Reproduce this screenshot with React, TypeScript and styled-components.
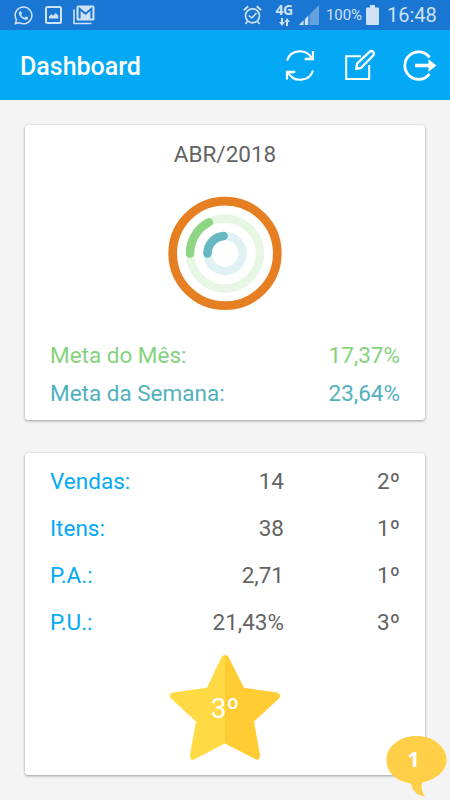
import React from "react";
import styled, { createGlobalStyle } from "styled-components";
import { FaWhatsapp } from "react-icons/fa";

const GlobalStyle = createGlobalStyle`
  * { box-sizing: border-box; }
  body {
    margin: 0;
    background: #f4f4f4;
    font-family: Roboto, "Liberation Sans", sans-serif;
  }
  svg { display: block; flex: none; overflow: visible; }
`;

const Screen = styled.div`
  width: 450px;
  height: 800px;
  display: flex;
  flex-direction: column;
  position: relative;
  overflow: hidden;
  background: #f4f4f4;
`;

const StatusBar = styled.div`
  height: 30px;
  flex: none;
  display: flex;
  align-items: center;
  padding: 0 13px 0 13px;
  background: #1976d2;
  color: #cfe1f5;
`;

const Notifications = styled.div`
  flex: 1;
  display: flex;
  align-items: center;
  gap: 11px;
`;

const Network = styled.div`
  width: 20px;
  margin: 0 5px 0 12px;
  display: flex;
  flex-direction: column;
  align-items: center;
  gap: 2px;
  font: 700 14px/12px "Open Sans", sans-serif;
  letter-spacing: -0.5px;
`;

const Battery = styled.span`
  width: 36px;
  margin: 0 4px 0 7px;
  font-size: 15px;
  line-height: 20px;
  letter-spacing: -0.1px;
  white-space: nowrap;
`;

const Clock = styled.span`
  width: 50px;
  margin-left: 8px;
  font-size: 20px;
  line-height: 30px;
  white-space: nowrap;
`;

const Header = styled.header`
  height: 70px;
  flex: none;
  display: flex;
  align-items: center;
  justify-content: space-between;
  padding: 0 13px 0 20px;
  background: #03a9f4;
  color: #fff;
`;

const Title = styled.h1`
  margin: 3px 0 0;
  font-size: 25px;
  line-height: 30px;
  font-weight: 500;
`;

const Actions = styled.div`
  display: flex;
  align-items: center;
  gap: 28px;
`;

const Content = styled.main`
  display: flex;
  flex-direction: column;
  gap: 33px;
  padding: 25px;
`;

const Card = styled.section<{ $height: number }>`
  height: ${(p) => p.$height}px;
  flex: none;
  display: flex;
  flex-direction: column;
  background: #fff;
  border-radius: 3px;
  box-shadow: 0 1px 3px rgba(0, 0, 0, 0.35), 0 0 1px rgba(0, 0, 0, 0.2);
  font-size: 22.5px;
  color: #646464;
`;

const Month = styled.h2`
  margin: 14px 0 28px;
  text-align: center;
  font-size: 22.5px;
  line-height: 30px;
  font-weight: 400;
`;

const Chart = styled.div`
  height: 114px;
  margin-bottom: 25px;
  display: flex;
  justify-content: center;
`;

const GoalRow = styled.div<{ $color: string }>`
  height: 38px;
  padding: 0 25px;
  display: flex;
  align-items: center;
  justify-content: space-between;
  color: ${(p) => p.$color};
`;

const Stats = styled.div`
  padding: 4px 25px 9px;
`;

const StatRow = styled.div`
  height: 47px;
  display: grid;
  grid-template-columns: 100px 134px 116px;
  align-items: center;
`;

const StatLabel = styled.span`
  color: #03a9f4;
`;

const StatValue = styled.span`
  text-align: right;
`;

const Medal = styled.div`
  width: 112px;
  height: 108px;
  margin: 0 auto;
  position: relative;
`;

const MedalText = styled.span`
  position: absolute;
  inset: 39px 0 auto 0;
  text-align: center;
  font-size: 28px;
  line-height: 32px;
  color: #fff;
`;

const Bubble = styled.div`
  position: absolute;
  left: 386px;
  top: 736px;
  width: 61px;
  height: 61px;
`;

const BubbleText = styled.span`
  position: absolute;
  inset: 8px 6px auto 0;
  text-align: center;
  font: 700 22px/28px "Open Sans", sans-serif;
  color: #fff;
`;

const PictureIcon = () => (
  <svg width="17" height="18" viewBox="0 0 17 18">
    <rect x="1" y="1" width="15" height="16" rx="1.5" fill="none" stroke="currentColor" strokeWidth="2" />
    <path d="M4 12.5V10.5L6.5 8L8.3 9.8L10.8 6.7L13.3 10V12.5Z" fill="currentColor" />
  </svg>
);

const MailIcon = () => (
  <svg width="22" height="20" viewBox="0 0 22 20" fill="none">
    <path d="M1 4.5V18.5H18.5" stroke="currentColor" strokeWidth="1.6" />
    <rect x="3.5" y="0.5" width="18" height="15" rx="1.5" fill="currentColor" />
    <path d="M6.6 13.5V3.8L12.5 8.7L18.4 3.8V13.5" stroke="#1976d2" strokeWidth="2" />
  </svg>
);

const AlarmIcon = () => (
  <svg width="19" height="20" viewBox="0 0 19 20" fill="none" stroke="currentColor">
    <circle cx="9.5" cy="10.8" r="7" strokeWidth="1.7" />
    <path d="M.8 5.2L5.2 1.2M18.2 5.2L13.8 1.2" strokeWidth="2" />
    <path d="M5.8 10.5L8.8 13L13.5 8M4.5 16.3L2.5 19M14.5 16.3L16.5 19" strokeWidth="1.6" />
  </svg>
);

const DataArrows = () => (
  <svg width="11" height="8" viewBox="0 0 11 8" fill="currentColor">
    <path d="M2 0H4V4H6L3 8L0 4H2ZM7 8H9V4H11L8 0L5.5 4H7Z" />
  </svg>
);

const SignalIcon = () => (
  <svg width="20" height="20" viewBox="0 0 20 20">
    <path d="M0 20L20 0V20Z" fill="#63a1df" />
    <path d="M0 20L4.7 15.3V20ZM5.8 20V14.2L9.5 10.5V20Z" fill="currentColor" />
    <path d="M5.2 14V20M10 9V20" stroke="#1976d2" strokeWidth="1" />
  </svg>
);

const BatteryIcon = () => (
  <svg width="13" height="20" viewBox="0 0 13 20" fill="currentColor">
    <path d="M4 0H9V2.5H12Q13 2.5 13 3.5V19Q13 20 12 20H1Q0 20 0 19V3.5Q0 2.5 1 2.5H4Z" />
  </svg>
);

const RefreshIcon = () => (
  <svg width="31" height="31" viewBox="0 0 31 31" fill="none" stroke="#fff" strokeWidth="2.2">
    <path d="M1 10.5C4.5 -.8 20.2 -2.2 26.2 8.8M27 1V9.2H18.7" />
    <path d="M27 20.5C23.5 31.8 7.8 33.2 1.8 22.2M1 29.5V21.8H9.3" />
    <path d="M1 22L8 22.5M27 9L20 8.5" />
  </svg>
);

const EditIcon = () => (
  <svg width="30" height="30" viewBox="0 0 30 30" fill="none" stroke="#fff" strokeWidth="2">
    <path d="M16 6.3H1.2V29H24.2V15" />
    <path
      d="M11.2 19L12.2 13.3L24.5 1.8Q26.6 .1 28.3 2Q29.7 3.9 27.9 5.8L16.2 17.8Z"
      strokeWidth="2.3"
      strokeLinejoin="round"
    />
  </svg>
);

const ExitIcon = () => (
  <svg width="34" height="31" viewBox="0 0 34 31" fill="none" stroke="#fff">
    <path d="M26.5 7.4A13.7 13.7 0 1 0 26.5 23.8" strokeWidth="2.8" />
    <path d="M12 15.5H26" strokeWidth="3.6" />
    <path d="M25.5 9.2L33.5 15.5L25.5 21.8Z" fill="#fff" stroke="none" />
  </svg>
);

interface RingProps {
  radius: number;
  color: string;
  track: string;
  percent: number;
}

const Ring = ({ radius, color, track, percent }: RingProps) => (
  <g fill="none" strokeWidth="8.5">
    <circle cx="57" cy="56.4" r={radius} stroke={track} />
    <circle
      cx="57"
      cy="56.4"
      r={radius}
      stroke={color}
      strokeLinecap="round"
      pathLength={100}
      strokeDasharray={`${percent} 100`}
      transform="rotate(180 57 56.4)"
    />
  </g>
);

const goals = [
  { label: "Meta do Mês:", value: "17,37%", color: "#85d27c" },
  { label: "Meta da Semana:", value: "23,64%", color: "#51b1bb" },
];

const stats = [
  ["Vendas:", "14", "2º"],
  ["Itens:", "38", "1º"],
  ["P.A.:", "2,71", "1º"],
  ["P.U.:", "21,43%", "3º"],
];

export default function App() {
  return (
    <Screen>
      <GlobalStyle />
      <StatusBar>
        <Notifications>
          <FaWhatsapp size={21} />
          <PictureIcon />
          <MailIcon />
        </Notifications>
        <AlarmIcon />
        <Network>
          4G
          <DataArrows />
        </Network>
        <SignalIcon />
        <Battery>100%</Battery>
        <BatteryIcon />
        <Clock>16:48</Clock>
      </StatusBar>
      <Header>
        <Title>Dashboard</Title>
        <Actions>
          <RefreshIcon />
          <EditIcon />
          <ExitIcon />
        </Actions>
      </Header>
      <Content>
        <Card $height={295}>
          <Month>ABR/2018</Month>
          <Chart>
            <svg width="114" height="114" viewBox="0 0 114 114">
              <circle cx="57" cy="56.4" r="52.3" fill="none" stroke="#e67e22" strokeWidth="8.7" />
              <Ring radius={35} color="#8ed584" track="#e7f6e5" percent={17.37} />
              <Ring radius={17.5} color="#66b9c1" track="#e0f1f3" percent={23.64} />
            </svg>
          </Chart>
          {goals.map((goal) => (
            <GoalRow key={goal.label} $color={goal.color}>
              <span>{goal.label}</span>
              <span>{goal.value}</span>
            </GoalRow>
          ))}
        </Card>
        <Card $height={322}>
          <Stats>
            {stats.map(([label, value, rank]) => (
              <StatRow key={label}>
                <StatLabel>{label}</StatLabel>
                <StatValue>{value}</StatValue>
                <StatValue>{rank}</StatValue>
              </StatRow>
            ))}
          </Stats>
          <Medal>
            <svg width="112" height="108" viewBox="0 0 112 108">
              <path d="M56 1Q53.5 1 52.5 3L38 33.7L4 38.5Q-1 40.5 1.5 44L27 67.5L21 101Q21 107 25 105.5L56 89.5Z" fill="#ffda44" />
              <path d="M56 1Q58.5 1 59.5 3L75 33.7L108 38.5Q113 40.5 110.5 44L85 67.5L91 101Q91 107 87 105.5L56 89.5Z" fill="#ffcd33" />
            </svg>
            <MedalText>3º</MedalText>
          </Medal>
        </Card>
      </Content>
      <Bubble>
        <svg width="61" height="61" viewBox="0 0 61 61">
          <path
            d="M30.5 0C47.5 0 60.5 10.5 60.5 24C60.5 34.5 51 43.5 36 46.5Q34.5 55 39 60.5Q27 59 25 47.5C9 45 .5 36 .5 24C.5 10.5 13.5 0 30.5 0Z"
            fill="#ffcf48"
          />
        </svg>
        <BubbleText>1</BubbleText>
      </Bubble>
    </Screen>
  );
}
